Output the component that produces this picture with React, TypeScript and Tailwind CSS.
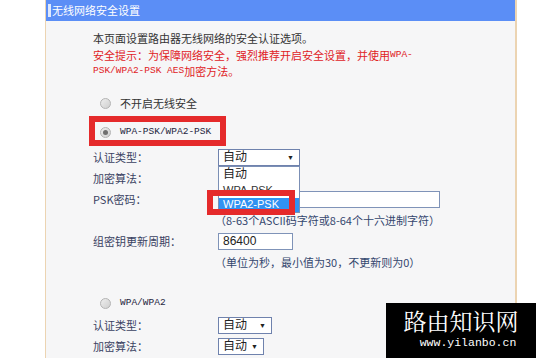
import type { ReactNode } from 'react'

const cjk = "font-['Noto_Sans_CJK_SC',sans-serif]"
const mono = "font-['Liberation_Mono','Noto_Sans_CJK_SC',monospace]"
const arial = "font-['Liberation_Sans','Noto_Sans_CJK_SC',sans-serif]"

function Radio({ checked = false }: { checked?: boolean }) {
  return (
    <span className="flex items-center justify-center w-[11px] h-[11px] rounded-full border border-[#b3b3b3] bg-gradient-to-br from-[#eeeeee] to-[#cfcfcf] flex-shrink-0">
      {checked && <span className="w-[5px] h-[5px] rounded-full bg-[#6f6f6f]" />}
    </span>
  )
}

function Select({ width, children }: { width: string; children?: ReactNode }) {
  return (
    <div className={`relative flex items-center h-[17px] ${width} border border-[#6f82ad] bg-white pl-[4px] pr-[5px] text-[12px] text-[#222] ${arial}`}>
      <span className="leading-none">自动</span>
      <span className="ml-auto text-[7px] leading-none">▼</span>
      {children}
    </div>
  )
}

function Row({ label, children }: { label?: string; children?: ReactNode }) {
  return (
    <div className="flex items-center h-[21px]">
      <span className="w-[125px] flex-shrink-0 text-[#3a4262]">{label}</span>
      {children}
    </div>
  )
}

function Line({ className = '', children }: { className?: string; children: ReactNode }) {
  return <div className={`flex items-center h-[16.5px] whitespace-nowrap ${className}`}>{children}</div>
}

export default function App() {
  return (
    <div className={`relative w-[536px] h-[358px] overflow-hidden bg-white ${cjk}`}>
      <div className="ml-[45px] w-[472px] h-full border-l border-r-2 border-[#ecd4b2] bg-[#f6f6f7]">
        {/* Header */}
        <div className="h-[21px] bg-[#5b8ef6] flex items-center text-white text-[11px]">
          <span className="ml-[2px] w-[3px] h-[13px] bg-white/80" />
          <span className="ml-[1px]">无线网络安全设置</span>
        </div>

        {/* Body */}
        <div className="pl-[47px] pt-[9px] text-[11px] leading-[16.5px]">
          <Line className="text-[#333]">本页面设置路由器无线网络的安全认证选项。</Line>
          <Line className="text-[#e0221f]">
            安全提示：为保障网络安全，强烈推荐开启安全设置，并使用<span className={`${mono} text-[9.5px]`}>WPA-</span>
          </Line>
          <Line className="text-[#e0221f]">
            <span className={`${mono} text-[9.5px]`}>PSK/WPA2-PSK AES</span>加密方法。
          </Line>

          <div className="mt-[13.5px] h-[20px] flex items-center pl-[7px] gap-[9px] text-[#333]">
            <Radio />
            <span>不开启无线安全</span>
          </div>

          <div className="mt-[9px] h-[20px] flex items-center pl-[7px] gap-[9px] text-[#1f2640]">
            <Radio checked />
            <span className={`${mono} text-[9.5px]`}>WPA-PSK/WPA2-PSK</span>
          </div>

          <div className="mt-[4.5px]">
            <Row label="认证类型：">
              <Select width="w-[82px]">
                {/* open dropdown list */}
                <div className={`absolute left-[-1px] top-[16px] w-[82px] border border-[#7b8fb5] bg-white text-[11px] z-10 ${arial}`}>
                  <div className="flex items-center h-[16px] pl-[4px] text-[12px]">自动</div>
                  <div className="flex items-center h-[15px] pl-[4px] text-[#333]">WPA-PSK</div>
                  <div className="flex items-center h-[14px] pl-[4px] bg-[#3092f2] text-white">WPA2-PSK</div>
                </div>
              </Select>
            </Row>
            <Row label="加密算法：" />
            <Row label="PSK密码：">
              <div className="h-[17px] w-[222px] border border-[#7f93b8] bg-white" />
            </Row>
            <Row>
              <span className="ml-[-3px] text-[#34466e]">（8-63个ASCII码字符或8-64个十六进制字符）</span>
            </Row>
            <Row label="组密钥更新周期：">
              <div className={`h-[17px] w-[75px] border border-[#7f93b8] bg-white pl-[4px] flex items-center text-[12px] text-[#222] ${arial}`}>
                86400
              </div>
            </Row>
            <Row>
              <span className="ml-[-3px] text-[#34466e]">（单位为秒，最小值为30，不更新则为0）</span>
            </Row>
          </div>

          <div className="mt-[20.5px] h-[20px] flex items-center pl-[7px] gap-[9px] text-[#1f2640]">
            <Radio />
            <span className={`${mono} text-[9.5px]`}>WPA/WPA2</span>
          </div>

          <div className="mt-[1.5px]">
            <Row label="认证类型：">
              <Select width="w-[54px]" />
            </Row>
            <Row label="加密算法：">
              <Select width="w-[46px]" />
            </Row>
            <Row>
              <div className="self-end h-[2px] w-[200px] bg-[#6f82ad]" />
            </Row>
          </div>
        </div>
      </div>

      {/* Annotation boxes */}
      <div className="absolute left-[89px] top-[116px] w-[137px] h-[30px] border-[6px] border-[#e52a2b]" />
      <div className="absolute left-[207px] top-[190px] w-[88px] h-[25px] border-[6px] border-[#e52a2b] z-20" />

      {/* Watermark */}
      <div className="absolute left-[386px] top-[303px] w-[150px] h-[55px] bg-black text-white flex flex-col items-center">
        <span className="mt-[4px] text-[23px] leading-[28px] font-['Noto_Serif_CJK_SC','Noto_Sans_CJK_SC',serif]">路由知识网</span>
        <span className={`ml-[14px] mt-[1px] text-[11.5px] leading-[14px] ${mono}`}>www.yilanbo.cn</span>
      </div>
    </div>
  )
}
